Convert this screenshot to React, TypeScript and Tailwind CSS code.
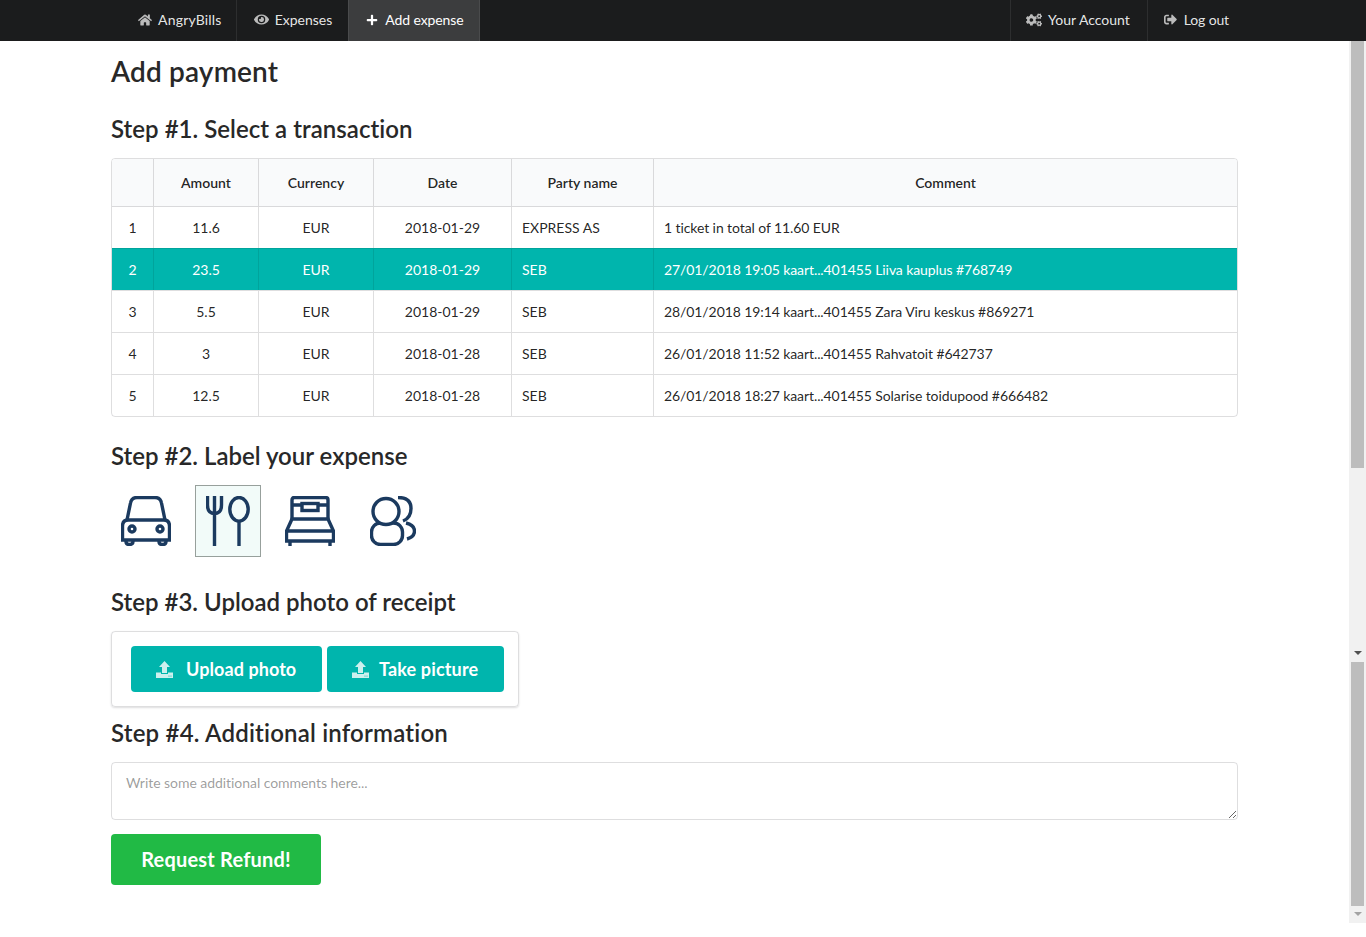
import { FaHome, FaEye, FaPlus, FaCogs, FaSignOutAlt } from "react-icons/fa";

const rows = [
  { n: 1, amount: "11.6", date: "2018-01-29", party: "EXPRESS AS", comment: "1 ticket in total of 11.60 EUR" },
  { n: 2, amount: "23.5", date: "2018-01-29", party: "SEB", comment: "27/01/2018 19:05 kaart...401455 Liiva kauplus #768749" },
  { n: 3, amount: "5.5", date: "2018-01-29", party: "SEB", comment: "28/01/2018 19:14 kaart...401455 Zara Viru keskus #869271" },
  { n: 4, amount: "3", date: "2018-01-28", party: "SEB", comment: "26/01/2018 11:52 kaart...401455 Rahvatoit #642737" },
  { n: 5, amount: "12.5", date: "2018-01-28", party: "SEB", comment: "26/01/2018 18:27 kaart...401455 Solarise toidupood #666482" },
];

const UploadIcon = () => (
  <svg width="17" height="17" viewBox="0 0 17 17" className="shrink-0 opacity-80">
    <path fill="#fff" d="M8.5 0 L14 6 H11 V12 H6 V6 H3 Z" />
    <path fill="#fff" d="M0 11.5 H5 V13 H12 V11.5 H17 V17 H0 Z" />
    <circle cx="13" cy="15" r="0.6" fill="#00b5ad" />
    <circle cx="15" cy="15" r="0.6" fill="#00b5ad" />
  </svg>
);

const CarIcon = () => (
  <svg width="50" height="50" viewBox="0 0 50 50" fill="none" stroke="#1b3a5f" strokeWidth="3.4">
    <path d="M6 24 L9.5 7 Q10.5 1.5 16 1.5 H34 Q39.5 1.5 40.5 7 L44 24" />
    <path d="M1.5 44 V30 Q1.5 24 7.5 24 H42.5 Q48.5 24 48.5 30 V44 Z" />
    <circle cx="11" cy="33" r="3" />
    <circle cx="39" cy="33" r="3" />
    <path d="M5 44 V45.5 Q5 48.5 8.5 48.5 Q12 48.5 12 45.5 V44 M38 44 V45.5 Q38 48.5 41.5 48.5 Q45 48.5 45 45.5 V44" />
  </svg>
);

const CutleryIcon = () => (
  <svg width="44" height="50" viewBox="0 0 44 50" fill="none" stroke="#1b3a5f" strokeWidth="3.4">
    <path d="M1.5 0 V9 Q1.5 17.5 8.5 17.5 Q15.5 17.5 15.5 9 V0 M8.5 0 V50" />
    <ellipse cx="33" cy="13.3" rx="9.2" ry="11.8" />
    <path d="M33 25 V50" />
  </svg>
);

const BedIcon = () => (
  <svg width="50" height="50" viewBox="0 0 50 50" fill="none" stroke="#1b3a5f" strokeWidth="3.4">
    <path d="M7 23 V4 Q7 1.5 9.5 1.5 H40.5 Q43 1.5 43 4 V23" />
    <rect x="17" y="7.5" width="16" height="7" />
    <path d="M7 9 H17 M33 9 H43" />
    <path d="M7 23 H43 L48.5 35 H1.5 Z" />
    <path d="M1.5 35 V45 H48.5 V35" />
    <path d="M5 45 V50 M45 45 V50" />
  </svg>
);

const PeopleIcon = () => (
  <svg width="46" height="50" viewBox="0 0 46 50" fill="none" stroke="#1b3a5f" strokeWidth="3.4">
    <rect x="1.5" y="27" width="31" height="21.5" rx="9" />
    <circle cx="16" cy="15.5" r="13" fill="#fff" />
    <path d="M28 1.5 Q41 1.5 41 12.5 Q41 22 33 25" />
    <path d="M36 27 Q44.5 29 44.5 35 Q44.5 41 37 43" />
  </svg>
);

const ScrollArrow = ({ dim }: { dim?: boolean }) => (
  <div className={`w-0 h-0 border-l-[4px] border-r-[4px] border-t-[4px] border-l-transparent border-r-transparent ${dim ? "border-t-[#a3a3a3]" : "border-t-[#505050]"}`} />
);

export default function App() {
  return (
    <div className="relative h-[937px] overflow-hidden bg-white text-[14px] text-[#000000de] font-['Lato','Helvetica_Neue',Arial,sans-serif] leading-[20px]">
      {/* top menu */}
      <div className="h-[41px] bg-[#1b1c1d] flex justify-between pl-[122px] pr-[120px] text-[#ffffffe6]">
        <div className="flex">
          <a className="flex items-center gap-[6px] pl-[16px] pr-[14px] pb-[2px] border-r border-[#2d2e2f] tracking-[0.2px]">
            <FaHome className="text-[#ffffffb3] text-[14px]" />
            AngryBills
          </a>
          <a className="flex items-center gap-[6px] pl-[17px] pr-[16px] pb-[2px]">
            <FaEye className="text-[#ffffffb3] text-[15px]" />
            Expenses
          </a>
          <a className="flex items-center gap-[7px] pl-[17px] pr-[15px] pb-[2px] bg-[#3c3d3e] text-white border-x border-[#4a4b4c] tracking-[-0.1px]">
            <FaPlus className="text-[12px]" />
            Add expense
          </a>
        </div>
        <div className="flex">
          <a className="flex items-center gap-[6px] pl-[15px] pr-[17px] pb-[2px] border-x border-[#2d2e2f]">
            <FaCogs className="text-[#ffffffb3] text-[16px]" />
            Your Account
          </a>
          <a className="flex items-center gap-[7px] pl-[16px] pr-[17px] pb-[2px] tracking-[-0.15px]">
            <FaSignOutAlt className="text-[#ffffffb3] text-[13px]" />
            Log out
          </a>
        </div>
      </div>

      <div className="w-[1127px] ml-[111px]">
        <h1 className="text-[28px] leading-[36px] font-semibold mt-[12px] text-[#282828] tracking-[0.15px]">Add payment</h1>
        <h2 className="text-[24px] leading-[32px] font-semibold mt-[24px] text-[#282828] tracking-[0.03px]">Step #1. Select a transaction</h2>

        <table className="mt-[13px] w-full border-separate border-spacing-0 border border-[#22242626] rounded-[4px] overflow-hidden table-fixed">
          <colgroup>
            <col className="w-[41px]" />
            <col className="w-[105px]" />
            <col className="w-[115px]" />
            <col className="w-[138px]" />
            <col className="w-[142px]" />
            <col />
          </colgroup>
          <thead>
            <tr className="bg-[#f9fafb] h-[48px]">
              <th className="font-semibold border-b border-[#22242626]"></th>
              <th className="font-semibold border-b border-l border-[#22242626]">Amount</th>
              <th className="font-semibold border-b border-l border-[#22242626]">Currency</th>
              <th className="font-semibold border-b border-l border-[#22242626]">Date</th>
              <th className="font-semibold border-b border-l border-[#22242626]">Party name</th>
              <th className="font-semibold border-b border-l border-[#22242626]">Comment</th>
            </tr>
          </thead>
          <tbody>
            {rows.map((r, i) => {
              const active = r.n === 2;
              const top = i > 0 ? "border-t" : "";
              const line = active ? "border-[#00000018]" : "border-[#22242626]";
              return (
                <tr key={r.n} className={active ? "bg-[#00b5ad] text-white h-[42px]" : i === 0 ? "h-[41px]" : "h-[42px]"}>
                  <td className={`text-center ${top} ${line}`}>{r.n}</td>
                  <td className={`text-center border-l ${top} ${line}`}>{r.amount}</td>
                  <td className={`text-center border-l ${top} ${line}`}>EUR</td>
                  <td className={`text-center border-l ${top} ${line}`}>{r.date}</td>
                  <td className={`pl-[10px] border-l ${top} ${line}`}>{r.party}</td>
                  <td className={`pl-[10px] border-l tracking-[-0.09px] ${top} ${line}`}>{r.comment}</td>
                </tr>
              );
            })}
          </tbody>
        </table>

        <h2 className="text-[24px] leading-[32px] font-semibold mt-[23px] text-[#282828]">Step #2. Label your expense</h2>

        <div className="flex mt-[13px] h-[72px]">
          <div className="w-[70px] flex items-center justify-center"><CarIcon /></div>
          <div className="w-[66px] ml-[14px] flex items-center justify-center border border-[#97a09c] bg-[#f2fbf9]"><CutleryIcon /></div>
          <div className="w-[50px] ml-[24px] flex items-center justify-center"><BedIcon /></div>
          <div className="w-[46px] ml-[35px] flex items-center justify-center"><PeopleIcon /></div>
        </div>

        <h2 className="text-[24px] leading-[32px] font-semibold mt-[29px] text-[#282828]">Step #3. Upload photo of receipt</h2>

        <div className="mt-[13px] w-[408px] h-[76px] border border-[#22242626] rounded-[4px] shadow-[0_1px_2px_0_rgba(34,36,38,0.15)] flex items-center pl-[19px] gap-[5px]">
          <button className="h-[46px] w-[191px] rounded-[4px] bg-[#00b5ad] text-white flex items-center pl-[25px] gap-[13px] text-[18px] font-bold tracking-[0.08px]">
            <UploadIcon />
            Upload photo
          </button>
          <button className="h-[46px] w-[177px] rounded-[4px] bg-[#00b5ad] text-white flex items-center pl-[25px] gap-[10px] text-[18px] font-bold tracking-[0.15px]">
            <UploadIcon />
            Take picture
          </button>
        </div>

        <h2 className="text-[24px] leading-[32px] font-semibold mt-[10px] text-[#282828] tracking-[0.2px]">Step #4. Additional information</h2>

        <textarea
          className="block mt-[13px] w-full h-[58px] px-[14px] py-[10px] border border-[#22242626] rounded-[4px] outline-none placeholder:text-[#00000066] text-[14px] leading-[20px] tracking-[-0.05px]"
          placeholder="Write some additional comments here..."
        />

        <button className="mt-[14px] h-[51px] w-[210px] rounded-[4px] bg-[#21ba45] text-white text-[20px] font-bold tracking-[0.2px] pb-[2px]">Request Refund!</button>
      </div>

      {/* scrollbar as captured */}
      <div className="absolute right-0 top-[41px] w-[17px] h-[882px] bg-[#f1f1f1] flex flex-col items-center">
        <div className="w-[13px] h-[427px] bg-[#bdbdbd]" />
        <div className="h-[183px] shrink-0" />
        <ScrollArrow />
        <div className="w-[13px] h-[244px] mt-[7px] bg-[#bdbdbd]" />
        <div className="mt-[6px]"><ScrollArrow dim /></div>
      </div>
    </div>
  );
}
